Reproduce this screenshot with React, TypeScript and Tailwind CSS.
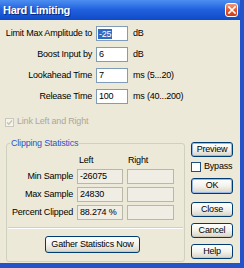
import React from "react";

const font = { fontFamily: '"Liberation Sans", Arial, sans-serif' };

const XpButton = ({ label, className = "", isDefault = false }: { label: string; className?: string; isDefault?: boolean }) => (
  <div
    className={`flex items-center justify-center rounded-[3px] border border-[#003c74] bg-gradient-to-b from-[#ffffff] via-[#f3f2ec] to-[#d8d4c6] text-[9px] text-black ${
      isDefault ? "shadow-[inset_0_0_0_1px_#98b8ea]" : "shadow-[inset_0_-1px_0_#cdc8b8]"
    } ${className}`}
  >
    {label}
  </div>
);

const FieldRow = ({ label, value, unit, selected = false }: { label: string; value: string; unit: string; selected?: boolean }) => (
  <div className="flex h-[15px] items-center">
    <span className="w-[92px] text-right">{label}</span>
    <div className="ml-[4px] flex h-[15px] w-[32px] items-center border border-[#7f9db9] bg-white pl-[1px]">
      {selected ? (
        <span className="bg-[#316ac5] px-[1px] leading-[10px] text-white">{value}</span>
      ) : (
        <span className="pl-[1px]">{value}</span>
      )}
    </div>
    <span className="ml-[5px]">{unit}</span>
  </div>
);

export default function App() {
  const stats = [
    { label: "Min Sample", left: "-26075" },
    { label: "Max Sample", left: "24830" },
    { label: "Percent Clipped", left: "88.274 %" },
  ];

  return (
    <div className="h-[268px] w-[244px] overflow-hidden bg-[#ece9d8] text-[9px] tracking-[-0.2px] text-black" style={font}>
      <div className="flex h-full w-full flex-col border-b-[5px] border-r-[4px] border-[#2453c9]">
        {/* title bar */}
        <div className="flex h-[20px] items-center justify-between bg-gradient-to-b from-[#4d8ef0] via-[#1f5fde] to-[#0f4bc8] pl-[3px] pr-[2px]">
          <span className="text-[11px] font-bold tracking-[-0.3px] text-white [text-shadow:1px_1px_0_#0a2a80]">
            Hard Limiting
          </span>
          <div className="flex h-[14px] w-[13px] items-center justify-center rounded-[3px] border border-white bg-gradient-to-b from-[#f09a78] via-[#e4582c] to-[#c8401a]">
            <svg width="8" height="8" viewBox="0 0 8 8">
              <path d="M1 1 L7 7 M7 1 L1 7" stroke="white" strokeWidth="1.6" strokeLinecap="square" />
            </svg>
          </div>
        </div>

        {/* body */}
        <div className="flex flex-1 flex-col pt-[6px]">
          <div className="flex flex-col gap-[6px]">
            <FieldRow label="Limit Max Amplitude to" value="-25" unit="dB" selected />
            <FieldRow label="Boost Input by" value="6" unit="dB" />
            <FieldRow label="Lookahead Time" value="7" unit="ms (5...20)" />
            <FieldRow label="Release Time" value="100" unit="ms (40...200)" />
          </div>

          <div className="ml-[5px] mt-[13px] flex h-[10px] items-center gap-[3px] text-[#aca899]">
            <div className="flex h-[9px] w-[9px] items-center justify-center border border-[#cac8bb] bg-[#f4f3ee]">
              <svg width="7" height="7" viewBox="0 0 7 7">
                <path d="M1 3.5 L2.8 5.3 L6 1.5" stroke="#c5c2b2" strokeWidth="1.4" fill="none" />
              </svg>
            </div>
            <span>Link Left and Right</span>
          </div>

          <div className="mt-[15px] flex items-start">
            {/* clipping statistics group */}
            <div className="relative ml-[6px] mt-[1px] flex h-[119px] w-[179px] flex-col rounded-[3px] border border-[#d0d0bf]">
              <span className="absolute -top-[7px] left-[3px] bg-[#ece9d8] px-[1px] text-[#2a56c8]">Clipping Statistics</span>
              <div className="mt-[10px] grid grid-cols-[66px_46px_47px] gap-x-[4px] gap-y-[3px] pl-[0px]">
                <span />
                <span className="h-[12px] pl-[2px] leading-[12px]">Left</span>
                <span className="h-[12px] pl-[1px] leading-[12px]">Right</span>
                {stats.map((s) => (
                  <React.Fragment key={s.label}>
                    <span className="flex h-[15px] items-center justify-end">{s.label}</span>
                    <div className="flex h-[15px] items-center border border-[#bab7a6] bg-[#efede4] pl-[2px]">{s.left}</div>
                    <div className="h-[15px] border border-[#bab7a6] bg-[#efede4]" />
                  </React.Fragment>
                ))}
              </div>
              <div className="mx-[1px] mt-[7px] h-[2px] border-b border-t border-b-white border-t-[#d0d0bf]" />
              <XpButton label="Gather Statistics Now" className="ml-[38px] mt-[7px] h-[17px] w-[95px]" />
            </div>

            {/* button column */}
            <div className="ml-[6px] flex w-[42px] flex-col">
              <XpButton label="Preview" className="h-[15px]" isDefault />
              <div className="mt-[4px] flex h-[12px] items-center gap-[3px]">
                <div className="h-[10px] w-[10px] border border-[#1c5180] bg-white" />
                <span>Bypass</span>
              </div>
              <XpButton label="OK" className="mt-[5px] h-[16px]" isDefault />
              <XpButton label="Close" className="mt-[8px] h-[15px]" />
              <XpButton label="Cancel" className="mt-[6px] h-[15px]" />
              <XpButton label="Help" className="mt-[6px] h-[15px]" />
            </div>
          </div>
        </div>
      </div>
    </div>
  );
}
